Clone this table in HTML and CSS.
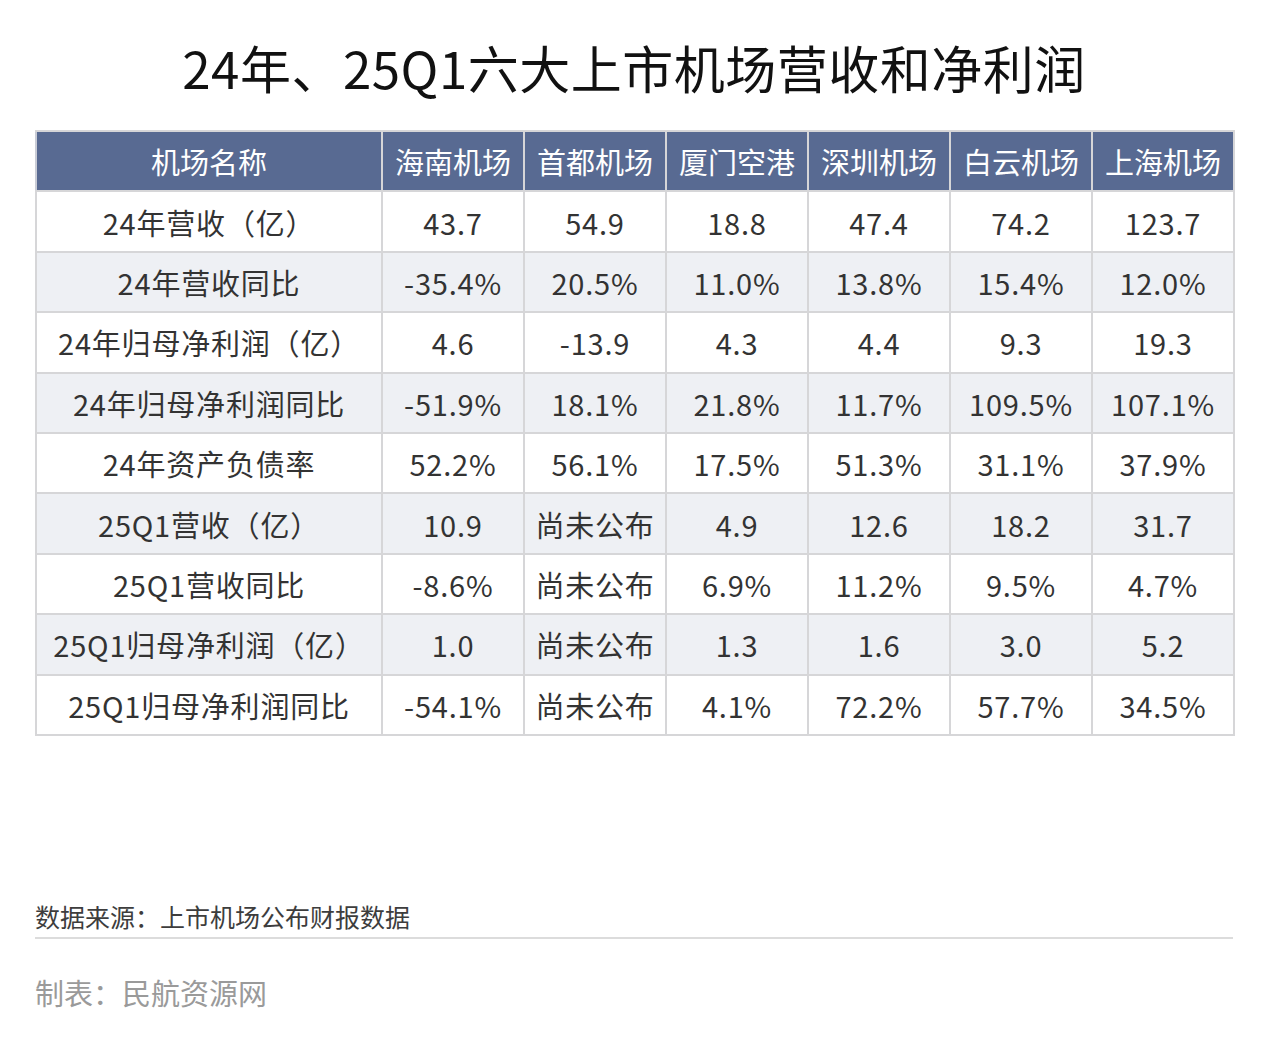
FILE: index.html
```html
<!DOCTYPE html>
<html lang="zh">
<head>
<meta charset="utf-8">
<link rel="stylesheet" href="styles.css">
</head>
<body>
<div class="page">
  <h1 class="title">24年、25Q1六大上市机场营收和净利润</h1>
  <table class="data">
    <colgroup>
      <col class="c-name"><col><col><col><col><col><col>
    </colgroup>
    <thead>
      <tr><th>机场名称</th><th>海南机场</th><th>首都机场</th><th>厦门空港</th><th>深圳机场</th><th>白云机场</th><th>上海机场</th></tr>
    </thead>
    <tbody>
      <tr><td>24年营收（亿）</td><td>43.7</td><td>54.9</td><td>18.8</td><td>47.4</td><td>74.2</td><td>123.7</td></tr>
      <tr><td>24年营收同比</td><td>-35.4%</td><td>20.5%</td><td>11.0%</td><td>13.8%</td><td>15.4%</td><td>12.0%</td></tr>
      <tr><td>24年归母净利润（亿）</td><td>4.6</td><td>-13.9</td><td>4.3</td><td>4.4</td><td>9.3</td><td>19.3</td></tr>
      <tr><td>24年归母净利润同比</td><td>-51.9%</td><td>18.1%</td><td>21.8%</td><td>11.7%</td><td>109.5%</td><td>107.1%</td></tr>
      <tr><td>24年资产负债率</td><td>52.2%</td><td>56.1%</td><td>17.5%</td><td>51.3%</td><td>31.1%</td><td>37.9%</td></tr>
      <tr><td>25Q1营收（亿）</td><td>10.9</td><td>尚未公布</td><td>4.9</td><td>12.6</td><td>18.2</td><td>31.7</td></tr>
      <tr><td>25Q1营收同比</td><td>-8.6%</td><td>尚未公布</td><td>6.9%</td><td>11.2%</td><td>9.5%</td><td>4.7%</td></tr>
      <tr><td>25Q1归母净利润（亿）</td><td>1.0</td><td>尚未公布</td><td>1.3</td><td>1.6</td><td>3.0</td><td>5.2</td></tr>
      <tr><td>25Q1归母净利润同比</td><td>-54.1%</td><td>尚未公布</td><td>4.1%</td><td>72.2%</td><td>57.7%</td><td>34.5%</td></tr>
    </tbody>
  </table>
  <div class="source">数据来源：上市机场公布财报数据</div>
  <div class="maker">制表：民航资源网</div>
</div>
</body>
</html>
```

FILE: styles.css
```css
html, body {
  margin: 0;
  padding: 0;
  background: #ffffff;
}
body {
  font-family: "Noto Sans CJK SC", "Noto Sans", sans-serif;
  color: #333333;
}
.page {
  width: 1198px;
  padding: 0 35px;
}
.title {
  margin: 0;
  padding-top: 36px;
  height: 130px;
  box-sizing: border-box;
  font-size: 51px;
  line-height: 62px;
  font-weight: 400;
  color: #111111;
  text-align: center;
  letter-spacing: 0.5px;
}
.data {
  width: 1198px;
  border-collapse: collapse;
  table-layout: fixed;
}
.data col { width: 142px; }
.data col.c-name { width: 346px; }
.data th, .data td {
  border: 2px solid #d6d6d8;
  height: 58.4px;
  padding: 0;
  text-align: center;
  font-size: 29px;
  line-height: 30px;
  letter-spacing: 0.8px;
  white-space: nowrap;
}
.data th {
  background: #586a92;
  color: #ffffff;
  font-weight: 400;
  border-color: #d6d6d8;
  border-left-color: #c9ccd6;
  letter-spacing: 0;
}
.data tbody td {
  color: #333333;
  font-weight: 400;
}
.data tbody tr:nth-child(even) td {
  background: #eef0f4;
}
.source {
  margin-top: 163px;
  font-size: 25px;
  line-height: 34px;
  color: #3d3d3d;
  padding-bottom: 4px;
  border-bottom: 2px solid #dcdcdc;
}
.maker {
  margin-top: 34px;
  font-size: 29px;
  line-height: 38px;
  color: #9a9a9a;
}
```
